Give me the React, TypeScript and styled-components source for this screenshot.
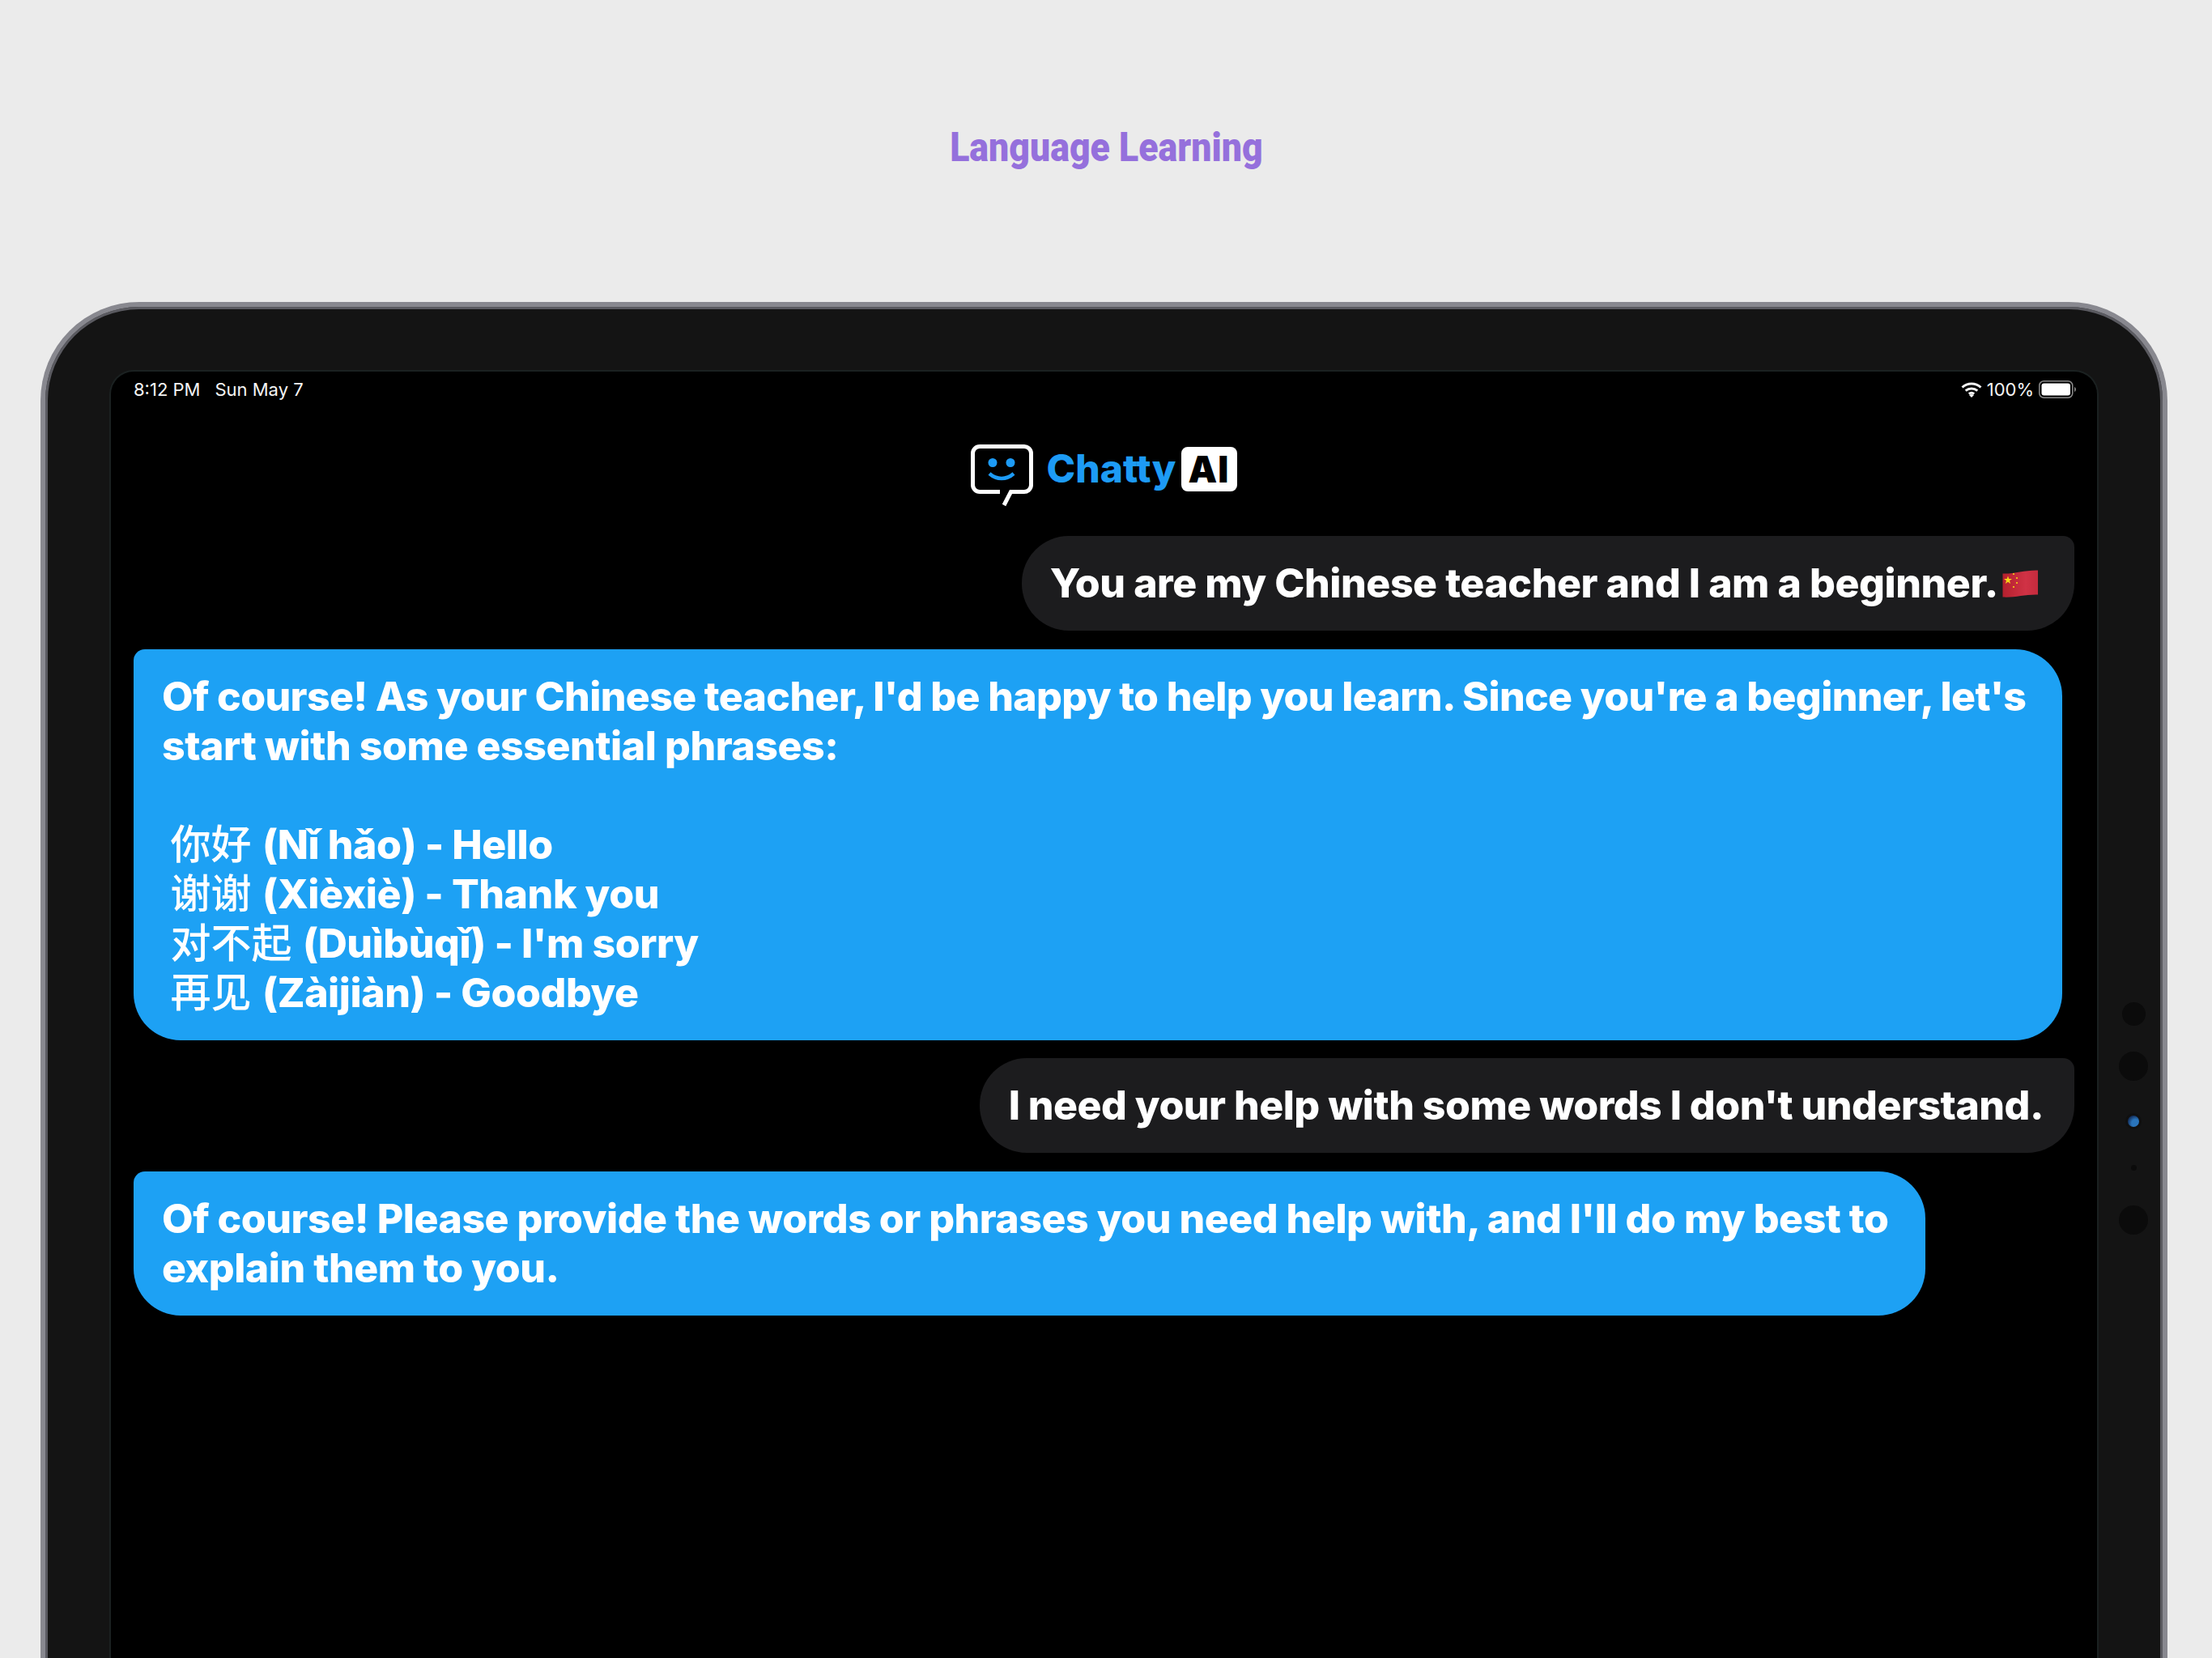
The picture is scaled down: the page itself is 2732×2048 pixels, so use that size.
import React from "react";
import styled, { createGlobalStyle } from "styled-components";

const Global = createGlobalStyle`
  html, body { margin: 0; padding: 0; background: #ebebeb; }
  body { width: 2732px; height: 2048px; overflow: hidden; font-family: Inter, "Noto Sans CJK SC", sans-serif; }
`;

const Page = styled.main`
  width: 2732px;
  height: 2048px;
  overflow: hidden;
  background: #ebebeb;
  display: flex;
  flex-direction: column;
  align-items: center;
  padding-top: 152px;
  box-sizing: border-box;
`;

const Title = styled.h1`
  margin: 0 0 161px;
  height: 60px;
  line-height: 60px;
  font-family: Roboto, sans-serif;
  font-weight: 900;
  font-size: 50px;
  color: #9570dc;
  transform: scaleX(0.893);
  white-space: nowrap;
`;

const Device = styled.div`
  position: relative;
  align-self: flex-start;
  margin-left: 50px;
  width: 2627px;
  height: 1800px;
  flex: none;
  box-sizing: border-box;
  background: #141414;
  border: 6px solid #88888f;
  border-bottom: 0;
  border-radius: 122px 122px 0 0;
  box-shadow: inset 0 0 0 3px #5a5a60;
  padding: 78px 79px 0 79px;
`;

const Screen = styled.div`
  height: 100%;
  box-sizing: border-box;
  background: #000;
  border: 2px solid #1b2121;
  border-bottom: 0;
  border-radius: 30px 30px 0 0;
  padding: 0 28px 0 28px;
  display: flex;
  flex-direction: column;
`;

const StatusBar = styled.div`
  height: 44px;
  margin-right: -2px;
  display: flex;
  align-items: center;
  justify-content: space-between;
  color: #f4f4f4;
  font-size: 22px;
  font-weight: 400;
`;

const StatusGroup = styled.div<{ $gap: number }>`
  display: flex;
  align-items: center;
  gap: ${(p) => p.$gap}px;
`;

const Brand = styled.div`
  margin-top: 46px;
  height: 76px;
  display: flex;
  justify-content: center;
  align-items: flex-start;
`;

const BrandName = styled.span`
  margin-left: 16px;
  font-family: Inter, sans-serif;
  font-weight: 800;
  font-size: 48px;
  line-height: 60px;
  color: #1d9bf5;
`;

const Badge = styled.span`
  margin: 3px 0 0 6px;
  width: 69px;
  height: 55px;
  background: #fff;
  border-radius: 8px;
  display: flex;
  align-items: center;
  justify-content: center;
  color: #000;
  font-family: Inter, sans-serif;
  font-weight: 900;
  font-size: 45px;
  letter-spacing: 1px;
`;

const Thread = styled.div`
  margin-top: 37px;
  display: flex;
  flex-direction: column;
  gap: 22.6px;
`;

const Bubble = styled.div<{ $user?: boolean; $right: number; $left: number; $spacing?: number }>`
  align-self: ${(p) => (p.$user ? "flex-end" : "flex-start")};
  width: fit-content;
  box-sizing: border-box;
  padding: 28px ${(p) => p.$right}px 28px ${(p) => p.$left}px;
  background: ${(p) => (p.$user ? "#1c1c1e" : "#1da1f4")};
  border-radius: ${(p) => (p.$user ? "58px 14px 58px 58px" : "14px 58px 58px 58px")};
  color: #fff;
  font-weight: 800;
  font-size: 50px;
  line-height: 61px;
  letter-spacing: ${(p) => p.$spacing ?? -0.45}px;
  white-space: pre;
`;

const TightLine = styled.span`
  letter-spacing: -0.66px;
`;

const Han = styled.span`
  font-family: "Noto Sans CJK SC", sans-serif;
  font-weight: 500;
  font-size: 50px;
  line-height: 1;
  letter-spacing: 0;
  margin-right: 3px;
`;

const InlineFlag = styled.svg`
  display: inline-block;
  vertical-align: 0;
  margin-left: 5px;
`;

const Sensors = styled.div`
  position: absolute;
  right: 16px;
  top: 859px;
  width: 40px;
  display: flex;
  flex-direction: column;
  align-items: center;
`;

const Sensor = styled.span<{ $size: number; $after: number }>`
  width: ${(p) => p.$size}px;
  height: ${(p) => p.$size}px;
  margin-bottom: ${(p) => p.$after}px;
  border-radius: 50%;
  background: #0b0b0b;
`;

const Camera = styled.span`
  width: 14px;
  height: 14px;
  margin-bottom: 47px;
  border-radius: 50%;
  background: radial-gradient(circle at 68% 68%, #2a75bb 0 35%, #153464 70%, #0d1c36 100%);
  box-shadow: 0 0 0 3px #101010;
`;

const Wifi = () => (
  <svg width="26" height="19" viewBox="0 0 26 19" fill="none" stroke="#f4f4f4" strokeWidth="3">
    <path d="M1.5 6.5C8 .6 18 .6 24.5 6.5" />
    <path d="M5.7 10.7c4.2-3.6 10.400-3.600 14.600 0" />
    <path d="M9.800 14.500c2-1.500 4.400-1.500 6.400 0" />
    <path d="M13 19l-3-3c1.800-1.300 4.200-1.300 6 0z" fill="#f4f4f4" stroke="none" />
  </svg>
);

const Battery = () => (
  <svg width="46" height="22" viewBox="0 0 46 22">
    <rect x="0.75" y="0.75" width="41" height="20.500" rx="5.500" fill="none" stroke="#8a8a8a" strokeWidth="1.500" />
    <rect x="3.500" y="3.500" width="35.500" height="15" rx="3" fill="#fff" />
    <path d="M44 8c1.300.5 2 1.600 2 3s-.7 2.500-2 3z" fill="#7d7d7d" />
  </svg>
);

const Logo = () => (
  <svg width="77" height="77" viewBox="0 0 77 77" fill="none">
    <path d="M36 58.500H11A8.500 8.500 0 0 1 2.500 50V11A8.500 8.500 0 0 1 11 2.500H66A8.500 8.500 0 0 1 74.500 11V50A8.500 8.500 0 0 1 66 58.500H49.500L41 75" stroke="#fff" strokeWidth="5" />
    <circle cx="27" cy="22.500" r="5.500" fill="#1d9bf5" />
    <circle cx="49" cy="22.500" r="5.500" fill="#1d9bf5" />
    <path d="M23 36c9 8 21 8 30 0" stroke="#1d9bf5" strokeWidth="4.500" />
  </svg>
);

const Flag = () => (
  <InlineFlag width="45" height="34" viewBox="0 0 45 34">
    <defs>
      <linearGradient id="flagRed" x1="0" x2="1" y1="0" y2="0">
        <stop offset="0" stopColor="#b5202e" />
        <stop offset="0.65" stopColor="#d03245" />
        <stop offset="1" stopColor="#c52b3d" />
      </linearGradient>
    </defs>
    <path d="M0.500 4.500C15 5 28 0 44 0.500V30.500C28 30 15 34.500 0.500 33.500Z" fill="url(#flagRed)" />
    <path d="M7 7.500l1.300 3.500 3.700 0-3 2.300 1.100 3.700-3.100-2.200-3.100 2.200 1.100-3.700-3-2.300 3.700 0z" fill="#f6d417" />
    <g fill="#f6d417">
      <circle cx="14" cy="5" r="1.100" />
      <circle cx="18" cy="10" r="1.100" />
      <circle cx="18" cy="16" r="1.100" />
      <circle cx="14" cy="21" r="1.100" />
    </g>
  </InlineFlag>
);

export default function App() {
  return (
    <Page>
      <Global />
      <Title>Language Learning</Title>
      <Device>
        <Screen>
          <StatusBar>
            <StatusGroup $gap={18}>
              <span>8:12 PM</span>
              <span>Sun May 7</span>
            </StatusGroup>
            <StatusGroup $gap={6}>
              <Wifi />
              <span>100%</span>
              <Battery />
            </StatusGroup>
          </StatusBar>
          <Brand>
            <Logo />
            <BrandName>Chatty</BrandName>
            <Badge>AI</Badge>
          </Brand>
          <Thread>
            <Bubble $user $left={35} $right={44}>
              You are my Chinese teacher and I am a beginner.
              <Flag />
            </Bubble>
            <Bubble $left={35} $right={45}>
              <TightLine>{"Of course! As your Chinese teacher, I'd be happy to help you learn. Since you're a beginner, let's"}</TightLine>
              {"\nstart with some essential phrases:\n\n "}
              <Han>你好</Han>
              {" (Nǐ hǎo) - Hello\n "}
              <Han>谢谢</Han>
              {" (Xièxiè) - Thank you\n "}
              <Han>对不起</Han>
              {" (Duìbùqǐ) - I'm sorry\n "}
              <Han>再见</Han>
              {" (Zàijiàn) - Goodbye"}
            </Bubble>
            <Bubble $user $left={36} $right={38} $spacing={-0.52}>
              I need your help with some words I don't understand.
            </Bubble>
            <Bubble $left={35} $right={46} $spacing={-0.49}>
              {"Of course! Please provide the words or phrases you need help with, and I'll do my best to\nexplain them to you."}
            </Bubble>
          </Thread>
        </Screen>
        <Sensors>
          <Sensor $size={29} $after={32} />
          <Sensor $size={36} $after={43} />
          <Camera />
          <Sensor $size={7} $after={43} />
          <Sensor $size={36} $after={0} />
        </Sensors>
      </Device>
    </Page>
  );
}
